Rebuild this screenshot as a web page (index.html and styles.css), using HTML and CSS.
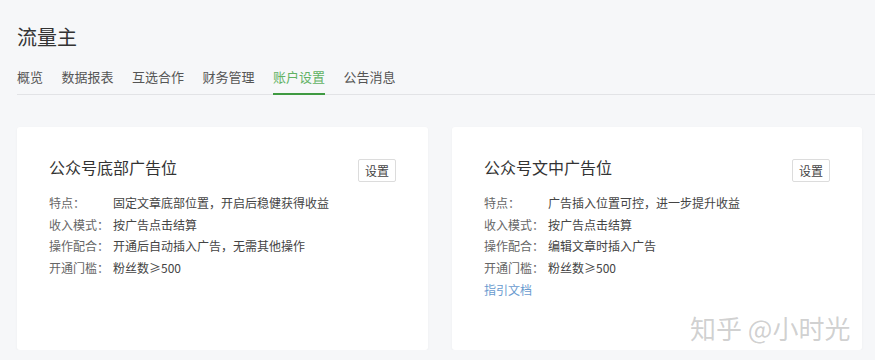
FILE: index.html
```html
<!DOCTYPE html>
<html lang="zh-CN">
<head>
    <meta charset="UTF-8">
    <meta name="viewport" content="width=device-width, initial-scale=1.0">
    <title>流量主</title>
    <link rel="stylesheet" href="styles.css">
</head>
<body>

<div class="page">
    <h1 class="page-title">流量主</h1>

    <ul class="tabs">
        <li class="tab">概览</li>
        <li class="tab">数据报表</li>
        <li class="tab">互选合作</li>
        <li class="tab">财务管理</li>
        <li class="tab active">账户设置</li>
        <li class="tab">公告消息</li>
    </ul>

    <div class="cards">
        <!-- 底部广告 -->
        <div class="card">
            <div class="card-head">
                <div class="card-title">公众号底部广告位</div>
                <button class="btn">设置</button>
            </div>
            <dl class="info">
                <div class="info-row"><dt>特点：</dt><dd>固定文章底部位置，开启后稳健获得收益</dd></div>
                <div class="info-row"><dt>收入模式：</dt><dd>按广告点击结算</dd></div>
                <div class="info-row"><dt>操作配合：</dt><dd>开通后自动插入广告，无需其他操作</dd></div>
                <div class="info-row"><dt>开通门槛：</dt><dd>粉丝数≥500</dd></div>
            </dl>
        </div>

        <!-- 文中广告 -->
        <div class="card">
            <div class="card-head">
                <div class="card-title">公众号文中广告位</div>
                <button class="btn">设置</button>
            </div>
            <dl class="info">
                <div class="info-row"><dt>特点：</dt><dd>广告插入位置可控，进一步提升收益</dd></div>
                <div class="info-row"><dt>收入模式：</dt><dd>按广告点击结算</dd></div>
                <div class="info-row"><dt>操作配合：</dt><dd>编辑文章时插入广告</dd></div>
                <div class="info-row"><dt>开通门槛：</dt><dd>粉丝数≥500</dd></div>
            </dl>
            <a class="doc-link" href="#">指引文档</a>
        </div>
    </div>
</div>

<div class="watermark">知乎 @小时光</div>

</body>
</html>
```

FILE: styles.css
```css
body {
    margin: 0;
    background-color: #f6f7f9;
    font-family: "Noto Sans CJK SC", "Noto Sans", sans-serif;
    color: #333;
}
.page {
    padding: 22px 13px 0 17px;
    margin-right: -13px;
}
.page-title {
    margin: 0;
    font-size: 20px;
    line-height: 30px;
    font-weight: normal;
    color: #333;
}
.tabs {
    list-style: none;
    margin: 15px 0 0;
    padding: 0;
    display: flex;
    gap: 18.5px;
    border-bottom: 1px solid #e2e3e6;
}
.tab {
    font-size: 13px;
    line-height: 20px;
    padding-bottom: 6px;
    margin-bottom: -1px;
    border-bottom: 2px solid transparent;
    color: #555;
}
.tab.active {
    color: #62b264;
    border-bottom-color: #3f9a42;
}
.cards {
    display: grid;
    grid-template-columns: 411px 410px;
    gap: 24px;
    margin-top: 32px;
}
.card {
    background: white;
    height: 223px;
    box-sizing: border-box;
    padding: 30px 32px 0;
    border-radius: 3px;
    box-shadow: 0 1px 3px rgba(0, 0, 0, 0.04);
}
.card-head {
    display: flex;
    justify-content: space-between;
    align-items: flex-start;
}
.card-title {
    font-size: 16px;
    line-height: 20px;
    color: #333;
}
.btn {
    margin-top: 2px;
    padding: 0 6px;
    height: 23px;
    font-family: inherit;
    font-size: 12px;
    color: #444;
    background: white;
    border: 1px solid #dcdcdc;
    border-radius: 2px;
}
.info {
    margin: 10px 0 0;
    font-size: 12px;
    line-height: 21.6px;
}
.info-row {
    display: flex;
}
.info dt {
    width: 64px;
    color: #666;
}
.info dd {
    margin: 0;
    color: #444;
}
.doc-link {
    display: block;
    margin-top: 2px;
    font-size: 12px;
    line-height: 20px;
    color: #6a9bcf;
    text-decoration: none;
}
.watermark {
    position: absolute;
    left: 690px;
    top: 311px;
    font-size: 26px;
    line-height: 34px;
    color: rgba(150, 150, 150, 0.45);
}
```
